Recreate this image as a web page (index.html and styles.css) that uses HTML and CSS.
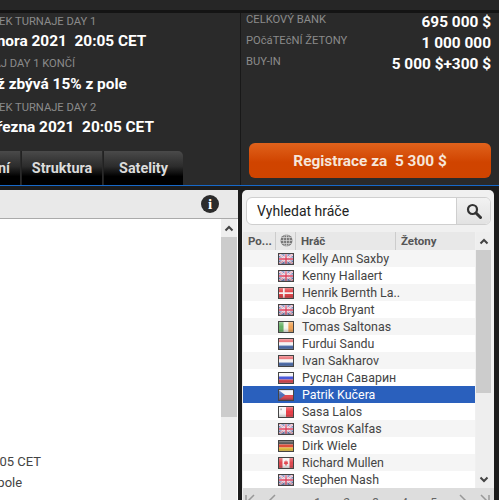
FILE: index.html
```html
<!DOCTYPE html>
<html lang="cs">
<head>
<meta charset="utf-8">
<title>Turnaj</title>
<link rel="stylesheet" href="styles.css">
</head>
<body>
<svg class="defs" width="0" height="0" aria-hidden="true">
  <defs>
    <linearGradient id="gloss" x1="0" y1="0" x2="0" y2="1">
      <stop offset="0" stop-color="#fff" stop-opacity=".3"/>
      <stop offset=".5" stop-color="#fff" stop-opacity="0"/>
      <stop offset="1" stop-color="#000" stop-opacity=".25"/>
    </linearGradient>
    <symbol id="f-uk" viewBox="0 0 16 11">
      <rect width="16" height="11" fill="#5f6fb0"/>
      <path d="M0 0L16 11M16 0L0 11" stroke="#f6eef2" stroke-width="2.4"/>
      <path d="M0 0L16 11M16 0L0 11" stroke="#e0607a" stroke-width=".8"/>
      <path d="M8 0V11M0 5.5H16" stroke="#f6eef2" stroke-width="3.4"/>
      <path d="M8 0V11M0 5.5H16" stroke="#dc3c5a" stroke-width="1.6"/>
      <rect width="16" height="11" fill="url(#gloss)"/>
    </symbol>
    <symbol id="f-dk" viewBox="0 0 16 11">
      <rect width="16" height="11" fill="#e03a40"/>
      <path d="M5.5 0V11M0 5.5H16" stroke="#f6f0f0" stroke-width="2"/>
      <rect width="16" height="11" fill="url(#gloss)"/>
    </symbol>
    <symbol id="f-ie" viewBox="0 0 16 11">
      <rect width="5.4" height="11" fill="#62b062"/>
      <rect x="5.4" width="5.3" height="11" fill="#f6f6f0"/>
      <rect x="10.7" width="5.3" height="11" fill="#f0a050"/>
      <rect width="16" height="11" fill="url(#gloss)"/>
    </symbol>
    <symbol id="f-nl" viewBox="0 0 16 11">
      <rect width="16" height="3.7" fill="#e8646a"/>
      <rect y="3.7" width="16" height="3.6" fill="#f6f4f4"/>
      <rect y="7.3" width="16" height="3.7" fill="#4a6cb0"/>
      <rect width="16" height="11" fill="url(#gloss)"/>
    </symbol>
    <symbol id="f-ru" viewBox="0 0 16 11">
      <rect width="16" height="3.7" fill="#f6f4f4"/>
      <rect y="3.7" width="16" height="3.6" fill="#4454d8"/>
      <rect y="7.3" width="16" height="3.7" fill="#e0444c"/>
      <rect width="16" height="11" fill="url(#gloss)"/>
    </symbol>
    <symbol id="f-cz" viewBox="0 0 16 11">
      <rect width="16" height="5.5" fill="#f6f4f4"/>
      <rect y="5.5" width="16" height="5.5" fill="#e0444c"/>
      <path d="M0 0L7 5.5L0 11Z" fill="#4a6cb8"/>
      <rect width="16" height="11" fill="url(#gloss)"/>
    </symbol>
    <symbol id="f-mt" viewBox="0 0 16 11">
      <rect width="8" height="11" fill="#f6f4f4"/>
      <rect x="8" width="8" height="11" fill="#ea3a44"/>
      <rect x="1.4" y="1.4" width="2" height="2" fill="#aaa"/>
      <rect width="16" height="11" fill="url(#gloss)"/>
    </symbol>
    <symbol id="f-de" viewBox="0 0 16 11">
      <rect width="16" height="3.7" fill="#3a3a3a"/>
      <rect y="3.7" width="16" height="3.6" fill="#dc4a36"/>
      <rect y="7.3" width="16" height="3.7" fill="#f0c83c"/>
      <rect width="16" height="11" fill="url(#gloss)"/>
    </symbol>
    <symbol id="f-ca" viewBox="0 0 16 11">
      <rect width="16" height="11" fill="#f6f4f4"/>
      <rect width="4" height="11" fill="#e0444c"/>
      <rect x="12" width="4" height="11" fill="#e0444c"/>
      <path d="M8 2L9 4L10.4 3.6L9.9 5.6L10.8 6L8.4 7.6V9H7.6V7.6L5.2 6L6.1 5.6L5.6 3.6L7 4Z" fill="#e0444c"/>
      <rect width="16" height="11" fill="url(#gloss)"/>
    </symbol>
  </defs>
</svg>

<div class="page">
  <div class="topstrip"></div>
  <header class="hero">
    <section class="schedule">
      <div class="facts">
        <div class="label">ZAČÁTEK TURNAJE DAY 1</div>
        <div class="value">1. února 2021&nbsp; 20:05 CET</div>
        <div class="label">TURNAJ DAY 1 KONČÍ</div>
        <div class="value value-mid">Když zbývá 15% z pole</div>
        <div class="label">ZAČÁTEK TURNAJE DAY 2</div>
        <div class="value">1. března 2021&nbsp; 20:05 CET</div>
      </div>
      <nav class="tabs">
        <div class="tab tab-first">Hodnocení</div>
        <div class="tab">Struktura</div>
        <div class="tab tab-last">Satelity</div>
      </nav>
    </section>
    <section class="prize">
      <dl class="stats">
        <div class="stat"><dt>CELKOVÝ BANK</dt><dd>695 000 $</dd></div>
        <div class="stat"><dt>POčáTEčNÍ ŽETONY</dt><dd>1 000 000</dd></div>
        <div class="stat"><dt>BUY-IN</dt><dd>5 000 $+300 $</dd></div>
      </dl>
      <button class="register">Registrace za&nbsp; 5 300 $</button>
    </section>
  </header>
  <div class="rule"></div>
  <main class="content">
    <section class="info">
      <div class="info-head"><span class="info-icon">i</span></div>
      <div class="info-body">
        <div class="info-text">
          <p class="date">1. února 2021 20:05 CET</p>
          <p class="pole">zbývá 15% z pole</p>
        </div>
        <div class="scrollbar">
          <div class="sb-btn"><svg width="10" height="7" viewBox="0 0 10 7"><path d="M1.5 5.5L5 2L8.5 5.5" fill="none" stroke="#444" stroke-width="2"/></svg></div>
          <div class="sb-thumb"></div>
        </div>
      </div>
    </section>
    <aside class="players">
      <div class="search">
        <div class="search-input">Vyhledat hráče</div>
        <div class="search-btn">
          <svg width="16" height="16" viewBox="0 0 16 16"><circle cx="6.5" cy="6.5" r="4.5" fill="none" stroke="#333" stroke-width="2.2"/><path d="M10 10L14.5 14.5" stroke="#333" stroke-width="3" stroke-linecap="round"/></svg>
        </div>
      </div>
      <div class="grid">
        <div class="table">
          <div class="thead">
            <div class="th th-pos">Po...</div>
            <div class="th th-globe">
              <svg width="13" height="13" viewBox="0 0 13 13"><circle cx="6.5" cy="6.5" r="6" fill="#777"/><path d="M6.5 .5V12.5M.5 6.5H12.5M1.5 3.5H11.5M1.5 9.5H11.5" stroke="#ddd" stroke-width=".7"/><ellipse cx="6.5" cy="6.5" rx="3" ry="6" fill="none" stroke="#ddd" stroke-width=".7"/></svg>
            </div>
            <div class="th th-name">Hráč</div>
            <div class="th th-chips">Žetony</div>
          </div>
          <div class="row alt"><svg class="flag"><use href="#f-uk"/></svg><span>Kelly Ann Saxby</span></div>
          <div class="row"><svg class="flag"><use href="#f-uk"/></svg><span>Kenny Hallaert</span></div>
          <div class="row alt"><svg class="flag"><use href="#f-dk"/></svg><span>Henrik Bernth La..</span></div>
          <div class="row"><svg class="flag"><use href="#f-uk"/></svg><span>Jacob Bryant</span></div>
          <div class="row alt"><svg class="flag"><use href="#f-ie"/></svg><span>Tomas Saltonas</span></div>
          <div class="row"><svg class="flag"><use href="#f-nl"/></svg><span>Furdui Sandu</span></div>
          <div class="row alt"><svg class="flag"><use href="#f-nl"/></svg><span>Ivan Sakharov</span></div>
          <div class="row"><svg class="flag"><use href="#f-ru"/></svg><span>Руслан Саварин</span></div>
          <div class="row selected"><svg class="flag"><use href="#f-cz"/></svg><span>Patrik Kučera</span></div>
          <div class="row"><svg class="flag"><use href="#f-mt"/></svg><span>Sasa Lalos</span></div>
          <div class="row alt"><svg class="flag"><use href="#f-uk"/></svg><span>Stavros Kalfas</span></div>
          <div class="row"><svg class="flag"><use href="#f-de"/></svg><span>Dirk Wiele</span></div>
          <div class="row alt"><svg class="flag"><use href="#f-ca"/></svg><span>Richard Mullen</span></div>
          <div class="row"><svg class="flag"><use href="#f-uk"/></svg><span>Stephen Nash</span></div>
        </div>
        <div class="scrollbar list-scroll">
          <div class="sb-btn"><svg width="10" height="7" viewBox="0 0 10 7"><path d="M1.5 5.5L5 2L8.5 5.5" fill="none" stroke="#444" stroke-width="2"/></svg></div>
          <div class="sb-thumb"></div>
          <div class="sb-btn sb-down"><svg width="10" height="7" viewBox="0 0 10 7"><path d="M1.5 1.5L5 5L8.5 1.5" fill="none" stroke="#444" stroke-width="2"/></svg></div>
        </div>
      </div>
      <div class="pager">
        <span class="pg pg-edge"><svg width="12" height="12" viewBox="0 0 12 12"><path d="M2 1V12M10 1L4 7L10 12" fill="none" stroke="#999" stroke-width="1.5"/></svg></span>
        <span class="pg pg-arrow"><svg width="10" height="12" viewBox="0 0 10 12"><path d="M8 1L2 7L8 12" fill="none" stroke="#999" stroke-width="1.5"/></svg></span>
        <span class="pg">1</span><span class="pg">2</span><span class="pg">3</span><span class="pg">4</span><span class="pg">5</span>
        <span class="pg pg-arrow"><svg width="10" height="12" viewBox="0 0 10 12"><path d="M2 1L8 7L2 12" fill="none" stroke="#999" stroke-width="1.5"/></svg></span>
        <span class="pg pg-edge"><svg width="12" height="12" viewBox="0 0 12 12"><path d="M2 1L8 7L2 12M10 1V12" fill="none" stroke="#999" stroke-width="1.5"/></svg></span>
      </div>
    </aside>
  </main>
</div>
</body>
</html>
```
FILE: styles.css
```css
* { box-sizing: border-box; }
html, body { margin: 0; padding: 0; }
body {
  width: 499px;
  height: 500px;
  overflow: hidden;
  background: #1c1c1c;
  font-family: Roboto, "Liberation Sans", sans-serif;
}
.defs { display: block; height: 0; }
.page { width: 499px; height: 500px; display: flex; flex-direction: column; overflow: hidden; }

.topstrip {
  height: 13px;
  flex: none;
  background: #262626;
  border-bottom: 3px solid #141414;
}
.hero { height: 172px; flex: none; display: flex; background: #2a2a2a; }
.schedule {
  width: 241px;
  flex: none;
  display: flex;
  flex-direction: column;
  overflow: hidden;
  border-right: 1px solid #181818;
}
.facts { margin-left: -29px; padding-top: 2px; white-space: nowrap; flex: 1; }
.label { font-size: 11.2px; line-height: 13px; color: #8b8b8b; margin-left: -6.5px; }
.value { font-size: 15.4px; line-height: 18px; font-weight: 700; color: #fff; margin-top: 3.5px; margin-bottom: 7.5px; }
.value-mid { margin-top: 4.5px; margin-bottom: 8.5px; }
.tabs { display: flex; height: 34px; flex: none; gap: 1px; margin-left: -68px; }
.tab {
  width: 81px;
  padding: 0 10px;
  display: flex;
  align-items: center;
  justify-content: center;
  font-size: 14.4px;
  font-weight: 700;
  color: #dcdcdc;
  white-space: nowrap;
  background: linear-gradient(#4a4a4a, #2c2c2c 45%, #000 75%, #000);
  border-left: 1px solid #222;
}
.tab-first { width: 88px; justify-content: flex-end; }
.tab-last { border-top-right-radius: 5px; width: 80px; }

.prize { flex: 1; display: flex; flex-direction: column; padding: 0 8px 7px 5px; min-width: 0; }
.stats { margin: 0; flex: 1; }
.stat { display: flex; justify-content: space-between; height: 21px; }
.stat dt { font-size: 11.2px; line-height: 13px; color: #8b8b8b; }
.stat dd { margin: 0; font-size: 15.4px; font-weight: 700; color: #fff; line-height: 18px; }
.register {
  height: 35px;
  width: 242px;
  margin-left: 3px;
  border: 0;
  border-radius: 6px;
  background: linear-gradient(#e0621c, #d04400 55%, #cf4400);
  color: #f6e6da;
  font: 700 15.4px Roboto, sans-serif;
}
.rule { height: 5px; flex: none; border-top: 1px solid #1769c9; background: #1c1c1c; }

.content { flex: 1; min-height: 0; display: flex; }
.info { width: 238px; flex: none; display: flex; flex-direction: column; background: #fff; }
.info-head {
  height: 29px;
  flex: none;
  display: flex;
  align-items: center;
  justify-content: flex-end;
  padding-right: 19px;
  background: #e9e9e9;
  border-bottom: 1px solid #aaa;
}
.info-icon {
  width: 18px;
  height: 18px;
  border-radius: 50%;
  background: #2c2c2c;
  color: #fff;
  font: 700 15px/18px "Liberation Serif", serif;
  text-align: center;
}
.info-body { flex: 1; display: flex; min-height: 0; }
.info-text { flex: 1; min-width: 0; overflow: hidden; padding-top: 235px; font-size: 13px; color: #444; white-space: nowrap; }
.info-text p { margin: 0; line-height: 15px; }
.info-text .date { margin: 0 0 6px -101px; }
.info-text .pole { margin-left: -76px; }
.scrollbar { width: 16px; flex: none; display: flex; flex-direction: column; background: #eee; }
.sb-btn { height: 18px; flex: none; display: flex; align-items: center; justify-content: center; }
.sb-thumb { height: 180px; flex: none; background: #ccc; }
.info .scrollbar { margin-right: 1px; }

.players {
  width: 252px;
  margin-left: 4px;
  flex: none;
  display: flex;
  flex-direction: column;
  background: #f0f0f0;
  border-top-left-radius: 5px;
  border-top-right-radius: 5px;
  padding: 7px 0 0 1px;
}
.search { height: 28px; margin: 0 3px; display: flex; flex: none; border: 1px solid #cfcfcf; border-radius: 6px; background: #fff; overflow: hidden; }
.search-input { flex: 1; padding-left: 10px; font-size: 14px; line-height: 26px; color: #222; }
.search-btn { width: 34px; flex: none; display: flex; align-items: center; justify-content: center; background: linear-gradient(#f2f2f2, #e2e2e2); border-left: 1px solid #cfcfcf; }
.grid { margin-top: 7px; flex: none; height: 256px; display: flex; gap: 1px; }
.table { width: 232px; flex: none; }
.thead { height: 18px; display: flex; background: #e8e8e8; }
.th { font-size: 11.5px; font-weight: 700; color: #555; line-height: 18px; padding-left: 5px; border-right: 1px solid #ccc; }
.th-pos { width: 33px; }
.th-globe { width: 20px; padding: 2px 0 0 4px; }
.th-name { width: 100px; }
.th-chips { flex: 1; border-right: 0; }
.row { height: 17px; display: flex; align-items: center; padding-left: 35px; background: #fff; font-size: 12.4px; color: #444; white-space: nowrap; }
.row.alt { background: #f5f5f5; }
.row.selected { background: #2a60bd; color: #fff; }
.flag { width: 16px; height: 12px; flex: none; margin-right: 8px; border: 1px solid #444; }
.list-scroll { width: 15px; }
.list-scroll .sb-thumb { height: 143px; }
.sb-down { margin-top: auto; }
.pager { flex: 1; min-height: 0; overflow: hidden; display: flex; background: #ddd; color: #666; font-size: 12px; line-height: 30px; }
.pg { width: 29px; flex: none; text-align: center; height: 30px; }
.pg-edge { width: 14px; padding-top: 6px; line-height: 0; }
.pg-arrow { width: 30px; padding-top: 6px; line-height: 0; }
.pg-arrow + .pg:not(.pg-edge) { margin-left: 16px; }
```
